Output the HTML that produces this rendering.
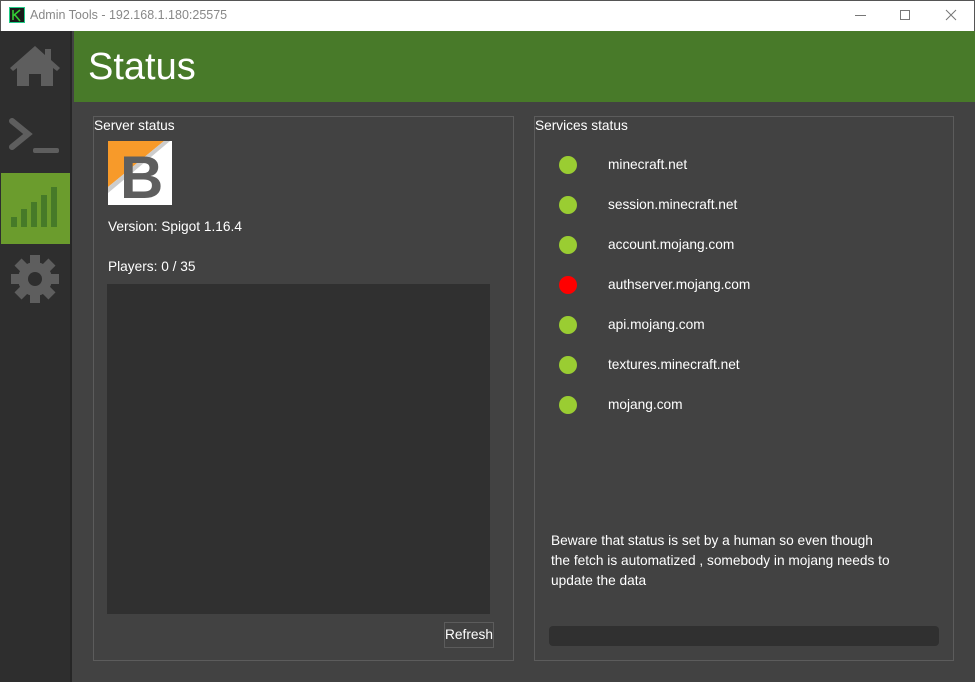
<!DOCTYPE html>
<html><head><style>
*{margin:0;padding:0;box-sizing:border-box}
body{width:975px;height:682px;background:#424242;font-family:"Liberation Sans",sans-serif;color:#fff;position:relative;overflow:hidden;font-size:13.7px}
.a{position:absolute}
</style></head><body>
<div class="a" style="left:0;top:0;width:975px;height:31px;background:#fff;border:1px solid #555;border-bottom:none"></div>
<div class="a" style="left:9px;top:7px;width:16px;height:16px;background:#1a1a1a;border:1px solid #2c8"></div>
<svg class="a" style="left:9px;top:7px" width="16" height="16"><path d="M4 3v10M4 9l7-6M6 8l5 6" stroke="#3c3" stroke-width="1.6" fill="none"/></svg>
<div class="a" style="left:30px;top:8px;font-size:12.5px;color:#888">Admin Tools - 192.168.1.180:25575</div>
<div class="a" style="left:855px;top:15px;width:11px;height:1px;background:#777"></div>
<div class="a" style="left:900px;top:10px;width:10px;height:10px;border:1px solid #777"></div>
<svg class="a" style="left:945px;top:9px" width="12" height="12"><path d="M1 1l10 10M11 1L1 11" stroke="#777" stroke-width="1"/></svg>
<div class="a" style="left:0;top:31px;width:72px;height:651px;background:#2e2e2e;border-right:2px solid #262626"></div>
<svg class="a" style="left:9px;top:44px" width="52" height="44"><path d="M26 2L1 24l3 3 4-3v18h12V30h12v12h12V24l4 3 3-3-9-8V5h-6v6z" fill="#5e5e5e"/></svg>
<svg class="a" style="left:9px;top:118px" width="52" height="38"><path d="M3 3l16 13L3 29" stroke="#5e5e5e" stroke-width="6" fill="none" stroke-linecap="round"/><rect x="24" y="30" width="26" height="5" rx="2" fill="#5e5e5e"/></svg>
<div class="a" style="left:1px;top:173px;width:69px;height:71px;background:#6b9c2d"></div>
<svg class="a" style="left:10px;top:187px" width="50" height="42"><g fill="#467a28"><rect x="1" y="30" width="6" height="10"/><rect x="11" y="22" width="6" height="18"/><rect x="21" y="15" width="6" height="25"/><rect x="31" y="8" width="6" height="32"/><rect x="41" y="0" width="6" height="40"/></g></svg>
<svg class="a" style="left:11px;top:254px" width="48" height="50" viewBox="-24 -25 48 50"><g fill="#5e5e5e"><circle r="17"/><rect x="-5" y="-24" width="10" height="48"/><rect x="-5" y="-24" width="10" height="48" transform="rotate(45)"/><rect x="-5" y="-24" width="10" height="48" transform="rotate(90)"/><rect x="-5" y="-24" width="10" height="48" transform="rotate(135)"/></g><circle r="7" fill="#2e2e2e"/></svg>
<div class="a" style="left:74px;top:31px;width:901px;height:71px;background:#487a29"></div>
<div class="a" style="left:88px;top:44px;font-size:38px;line-height:46px">Status</div>
<div class="a" style="left:93px;top:116px;width:421px;height:545px;border:1px solid #5c5c5c"></div>
<div class="a" style="left:94px;top:118px">Server status</div>
<svg class="a" style="left:108px;top:141px" width="64" height="64"><rect width="64" height="64" fill="#fff"/><path d="M0 0h56L0 46z" fill="#f79a2a"/><path d="M56 0h6L0 52v-6z" fill="#ccc"/><text x="12" y="57" font-family="Liberation Sans" font-weight="bold" font-size="60" fill="#5e5e5e">B</text></svg>
<div class="a" style="left:108px;top:219px">Version: Spigot 1.16.4</div>
<div class="a" style="left:108px;top:259px">Players: 0 / 35</div>
<div class="a" style="left:107px;top:284px;width:383px;height:330px;background:#303030"></div>
<div class="a" style="left:444px;top:622px;width:50px;height:26px;border:1px solid #5c5c5c;text-align:center;line-height:24px">Refresh</div>
<div class="a" style="left:534px;top:116px;width:420px;height:545px;border:1px solid #5c5c5c"></div>
<div class="a" style="left:535px;top:118px">Services status</div>
<div class="a" style="left:559px;top:156px;line-height:18px">
<div style="height:40px"><span style="display:inline-block;width:18px;height:18px;border-radius:50%;background:#9acd32;vertical-align:middle"></span><span style="margin-left:31px">minecraft.net</span></div>
<div style="height:40px"><span style="display:inline-block;width:18px;height:18px;border-radius:50%;background:#9acd32;vertical-align:middle"></span><span style="margin-left:31px">session.minecraft.net</span></div>
<div style="height:40px"><span style="display:inline-block;width:18px;height:18px;border-radius:50%;background:#9acd32;vertical-align:middle"></span><span style="margin-left:31px">account.mojang.com</span></div>
<div style="height:40px"><span style="display:inline-block;width:18px;height:18px;border-radius:50%;background:#f00;vertical-align:middle"></span><span style="margin-left:31px">authserver.mojang.com</span></div>
<div style="height:40px"><span style="display:inline-block;width:18px;height:18px;border-radius:50%;background:#9acd32;vertical-align:middle"></span><span style="margin-left:31px">api.mojang.com</span></div>
<div style="height:40px"><span style="display:inline-block;width:18px;height:18px;border-radius:50%;background:#9acd32;vertical-align:middle"></span><span style="margin-left:31px">textures.minecraft.net</span></div>
<div style="height:40px"><span style="display:inline-block;width:18px;height:18px;border-radius:50%;background:#9acd32;vertical-align:middle"></span><span style="margin-left:31px">mojang.com</span></div>
</div>
<div class="a" style="left:551px;top:531px;line-height:20px">Beware that status is set by a human so even though<br>the fetch is automatized , somebody in mojang needs to<br>update the data</div>
<div class="a" style="left:549px;top:626px;width:390px;height:20px;background:#303030;border-radius:4px"></div>
</body></html>
